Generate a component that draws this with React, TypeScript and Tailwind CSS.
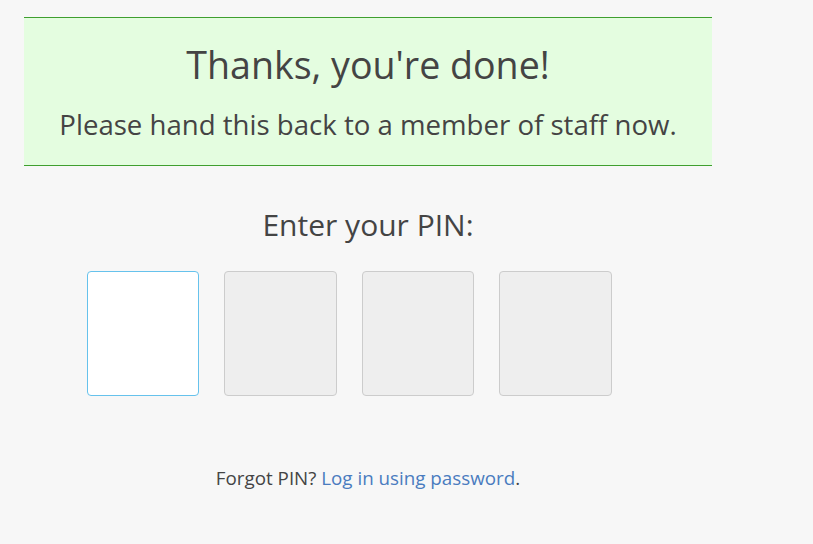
// Pantalla de fin: mensaje de agradecimiento y teclado de PIN.

export default function App() {
  return (
    <div className="min-h-[544px] w-full bg-[#f7f7f7] pt-[17px] font-['Open_Sans',sans-serif] text-[#444444]">
      <div className="ml-[24px] w-[688px]">
        {/* Banner de exito */}
        <div className="border-y border-[#3f9f2f] bg-[#e4fde0] pt-[21px] pb-[23px] text-center">
          <h1 className="text-[37.6px] leading-[52px]">Thanks, you're done!</h1>
          <p className="mt-[15px] text-[27.6px] leading-[36px]">
            Please hand this back to a member of staff now.
          </p>
        </div>

        {/* Entrada del PIN */}
        <p className="mt-[39px] text-center text-[30px] leading-[40px]">Enter your PIN:</p>
        <div className="mt-[26px] flex gap-[25px] pl-[63px]">
          <div className="h-[125px] w-[112px] rounded-[4px] border border-[#66c2ec] bg-white" />
          <div className="h-[125px] w-[113px] rounded-[4px] border border-[#cccccc] bg-[#eeeeee]" />
          <div className="h-[125px] w-[112px] rounded-[4px] border border-[#cccccc] bg-[#eeeeee]" />
          <div className="h-[125px] w-[113px] rounded-[4px] border border-[#cccccc] bg-[#eeeeee]" />
        </div>

        <p className="mt-[69px] text-center text-[18.8px] leading-[26px]">
          Forgot PIN? <a href="#" className="text-[#4a7cbf]">Log in using password</a>.
        </p>
      </div>
    </div>
  );
}
